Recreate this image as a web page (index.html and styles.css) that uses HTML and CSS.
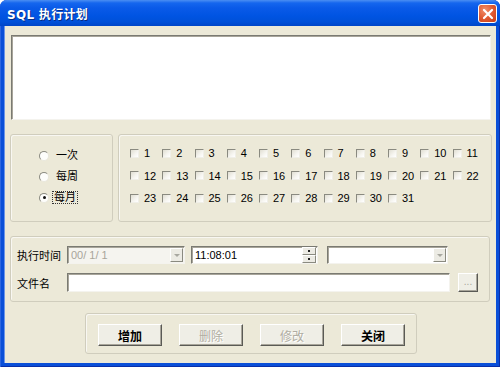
FILE: index.html
```html
<!DOCTYPE html>
<html>
<head>
<meta charset="utf-8">
<link rel="stylesheet" href="styles.css">
</head>
<body>
<div class="window">
  <div class="titlebar">
    <span class="title">SQL 执行计划</span>
    <span class="close">
      <svg width="12" height="12" viewBox="0 0 12 12"><path d="M2 2 L10 10 M10 2 L2 10" stroke="#fff" stroke-width="2.2" stroke-linecap="round"/></svg>
    </span>
  </div>
  <div class="client">
    <div class="memo"></div>
    <div class="mid">
      <div class="group radios">
        <div class="radio-row"><span class="radio"></span><span class="rlabel">一次</span></div>
        <div class="radio-row"><span class="radio"></span><span class="rlabel">每周</span></div>
        <div class="radio-row"><span class="radio on"></span><span class="rlabel focus">每月</span></div>
      </div>
      <div class="group days">
        <div class="day"><span class="chk"></span>1</div>
        <div class="day"><span class="chk"></span>2</div>
        <div class="day"><span class="chk"></span>3</div>
        <div class="day"><span class="chk"></span>4</div>
        <div class="day"><span class="chk"></span>5</div>
        <div class="day"><span class="chk"></span>6</div>
        <div class="day"><span class="chk"></span>7</div>
        <div class="day"><span class="chk"></span>8</div>
        <div class="day"><span class="chk"></span>9</div>
        <div class="day"><span class="chk"></span>10</div>
        <div class="day"><span class="chk"></span>11</div>
        <div class="day"><span class="chk"></span>12</div>
        <div class="day"><span class="chk"></span>13</div>
        <div class="day"><span class="chk"></span>14</div>
        <div class="day"><span class="chk"></span>15</div>
        <div class="day"><span class="chk"></span>16</div>
        <div class="day"><span class="chk"></span>17</div>
        <div class="day"><span class="chk"></span>18</div>
        <div class="day"><span class="chk"></span>19</div>
        <div class="day"><span class="chk"></span>20</div>
        <div class="day"><span class="chk"></span>21</div>
        <div class="day"><span class="chk"></span>22</div>
        <div class="day"><span class="chk"></span>23</div>
        <div class="day"><span class="chk"></span>24</div>
        <div class="day"><span class="chk"></span>25</div>
        <div class="day"><span class="chk"></span>26</div>
        <div class="day"><span class="chk"></span>27</div>
        <div class="day"><span class="chk"></span>28</div>
        <div class="day"><span class="chk"></span>29</div>
        <div class="day"><span class="chk"></span>30</div>
        <div class="day"><span class="chk"></span>31</div>
      </div>
    </div>
    <div class="group settings">
      <div class="srow r1">
        <span class="lbl">执行时间</span>
        <div class="field combo date disabled"><span class="ftext">00/ 1/ 1</span><span class="dropbtn"><span class="tri"></span></span></div>
        <div class="field time"><span class="ftext">11:08:01</span><span class="spin"><span class="sb"><span class="dot"></span></span><span class="sb"><span class="dot"></span></span></span></div>
        <div class="field combo third"><span class="ftext"></span><span class="dropbtn"><span class="tri"></span></span></div>
      </div>
      <div class="srow r2">
        <span class="lbl">文件名</span>
        <div class="field file"></div>
        <span class="btn small">...</span>
      </div>
    </div>
    <div class="group actions">
      <span class="btn">增加</span>
      <span class="btn dis">删除</span>
      <span class="btn dis">修改</span>
      <span class="btn">关闭</span>
    </div>
  </div>
</div>
</body>
</html>
```
FILE: styles.css
```css
html, body {
  margin: 0;
  padding: 0;
  background: #ffffff;
}
body {
  width: 500px;
  height: 367px;
  overflow: hidden;
  font-family: "Liberation Sans", "Noto Sans CJK SC", sans-serif;
  font-size: 11px;
  color: #000;
}
.window {
  width: 500px;
  height: 367px;
  box-sizing: border-box;
  background: #0A4FD8;
  border-radius: 7px 7px 0 0;
  display: flex;
  flex-direction: column;
  box-shadow: inset 1px 0 #2d66e0, inset -1px 0 #0a2fa8, inset 0 -1px #0a2fa8;
}
.titlebar {
  height: 26px;
  flex: none;
  border-radius: 7px 7px 0 0;
  background: linear-gradient(to bottom, #4b8ef2 0px, #1566ee 3px, #0a5ae8 8px, #0054e2 16px, #0050d8 22px, #0046c8 26px);
  display: flex;
  align-items: center;
  padding: 0 3px 0 7px;
  box-sizing: border-box;
}
.title {
  flex: 1;
  color: #fff;
  font-weight: bold;
  font-size: 12px;
  font-family: "DejaVu Sans", "Noto Sans CJK SC", sans-serif;
  text-shadow: 1px 1px #0a2a80;
  letter-spacing: 0.3px;
}
.close {
  width: 17px;
  height: 17px;
  border: 1px solid #fff;
  border-radius: 3px;
  background: radial-gradient(circle at 35% 30%, #f0906c 0%, #e05a32 50%, #c83c14 100%);
  display: flex;
  align-items: center;
  justify-content: center;
  margin-top: 1px;
}
.client {
  flex: 1;
  margin: 0 4px 4px 4px;
  background: #ECE9D8;
  padding: 9px 0 0 6px;
  display: flex;
  flex-direction: column;
  box-shadow: inset 1px 0 #6b95e8;
}
.memo {
  margin-left: 1px;
  width: 480px;
  height: 85px;
  box-sizing: border-box;
  background: #fff;
  border: 1px solid;
  border-color: #7a7a72 #f4f3ee #f4f3ee #7a7a72;
  box-shadow: inset 1px 1px #a8a59a;
}
.mid {
  margin-top: 14px;
  height: 88px;
  display: flex;
  gap: 5px;
}
.group {
  box-sizing: border-box;
  border: 1px solid #d0cdbd;
  border-radius: 3px;
  box-shadow: inset 1px 1px #f8f7f2;
}
.radios {
  width: 103px;
  padding: 10px 0 0 28px;
}
.radio-row {
  height: 21px;
  display: flex;
  align-items: center;
  gap: 5px;
}
.radio {
  width: 8px;
  height: 8px;
  border-radius: 50%;
  border: 1px solid;
  border-color: #8a8a80 #e8e6dc #e8e6dc #8a8a80;
  background: #fdfdfb;
  display: flex;
  align-items: center;
  justify-content: center;
}
.radio.on::after {
  content: "";
  width: 3px;
  height: 3px;
  border-radius: 50%;
  background: #111;
}
.rlabel {
  line-height: 11px;
  padding: 0 1px;
  border: 1px solid transparent;
}
.rlabel.focus {
  border: 1px dotted #333;
  margin-left: -2px;
}
.days {
  width: 374px;
  padding: 7px 0 0 11px;
  display: grid;
  grid-template-columns: repeat(11, 32.25px);
  grid-auto-rows: 22.5px;
  align-items: center;
}
.day {
  display: flex;
  align-items: center;
  gap: 5px;
  font-size: 11px;
}
.chk {
  width: 9px;
  height: 9px;
  box-sizing: border-box;
  border: 1px solid;
  border-color: #8a8a80 #f0efe8 #f0efe8 #8a8a80;
  background: linear-gradient(135deg, #e0ded2 0%, #f6f5f0 60%, #ffffff 100%);
  flex: none;
}
.settings {
  margin-top: 14px;
  width: 480px;
  height: 66px;
  padding: 9px 0 0 6px;
}
.srow {
  display: flex;
  align-items: center;
}
.r1 { height: 18px; }
.r2 { height: 19px; margin-top: 9px; }
.lbl {
  width: 50px;
  flex: none;
}
.field {
  box-sizing: border-box;
  height: 100%;
  background: #fff;
  border: 1px solid;
  border-color: #7a7a72 #f4f3ee #f4f3ee #7a7a72;
  box-shadow: inset 1px 1px #a8a59a;
  display: flex;
  align-items: center;
  position: relative;
}
.ftext {
  flex: 1;
  padding-left: 3px;
}
.date { width: 118px; }
.date.disabled { background: #f5f4ef; color: #a8a59a; }
.time { width: 127px; margin-left: 6px; }
.third { width: 121px; margin-left: 9px; }
.file { width: 383px; }
.dropbtn {
  width: 13px;
  height: 14px;
  box-sizing: border-box;
  margin-right: 1px;
  background: #ecebe4;
  border: 1px solid;
  border-color: #fff #8a8a80 #8a8a80 #fff;
  display: flex;
  align-items: center;
  justify-content: center;
}
.tri {
  width: 0;
  height: 0;
  border-left: 3px solid transparent;
  border-right: 3px solid transparent;
  border-top: 3px solid #a8a8a0;
}
.spin {
  width: 14px;
  height: 16px;
  display: flex;
  flex-direction: column;
  margin-right: 1px;
}
.sb {
  flex: 1;
  box-sizing: border-box;
  background: #ecebe4;
  border: 1px solid;
  border-color: #fff #8a8a80 #8a8a80 #fff;
  display: flex;
  align-items: center;
  justify-content: center;
}
.dot {
  width: 2px;
  height: 2px;
  background: #222;
}
.btn {
  box-sizing: border-box;
  width: 64px;
  height: 22px;
  background: #efeee6;
  border: 1px solid;
  border-color: #fff #5a5a55 #5a5a55 #fff;
  box-shadow: inset -1px -1px #a8a59a;
  display: flex;
  align-items: center;
  justify-content: center;
  font-size: 12px;
  font-weight: bold;
}
.btn.dis {
  color: #b0ada2;
  font-weight: normal;
  text-shadow: 1px 1px #fff;
}
.btn.small {
  width: 20px;
  height: 19px;
  margin-left: 8px;
  font-weight: normal;
  color: #a8a59a;
  font-size: 10px;
  align-items: flex-end;
  padding-bottom: 4px;
}
.actions {
  margin-top: 11px;
  margin-left: 75px;
  width: 332px;
  height: 41px;
  padding: 10px 0 0 12px;
  display: flex;
  gap: 17px;
}
```
